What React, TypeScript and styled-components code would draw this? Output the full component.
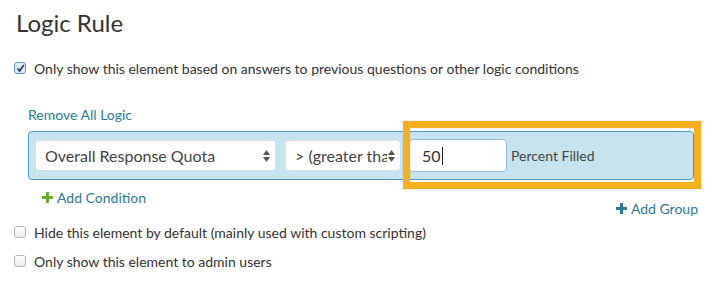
import styled, { createGlobalStyle } from 'styled-components';

const GlobalStyle = createGlobalStyle`
  html, body { margin: 0; padding: 0; background: #fff; }
  body { font-family: Lato, "Open Sans", sans-serif; color: #444; }
`;

const Page = styled.div`
  width: 710px;
  height: 282px;
  padding: 8px 0 0 14px;
  box-sizing: border-box;
  position: relative;
  overflow: hidden;
`;

const Title = styled.h1`
  margin: 0 0 0 2px;
  font-size: 24px;
  font-weight: 400;
  color: #333;
  line-height: 30px;
`;

const CheckRow = styled.label<{ $top: number }>`
  display: flex;
  align-items: center;
  gap: 8px;
  margin-top: ${(p) => p.$top}px;
  font-size: 14px;
  color: #333;
  height: 16px;
`;

const Box = styled.span<{ $checked?: boolean }>`
  width: 10px;
  height: 10px;
  border-radius: 3px;
  border: 1px solid ${(p) => (p.$checked ? '#6a8ec8' : '#b4b4b4')};
  background: ${(p) => (p.$checked ? '#e4eefc' : 'linear-gradient(#fff, #ececec)')};
  display: flex;
  align-items: center;
  justify-content: center;
`;

const Link = styled.a`
  color: #2b7a9c;
  font-size: 14px;
  text-decoration: none;
  display: flex;
  align-items: center;
  gap: 4px;
  height: 16px;
`;

const RemoveLink = styled(Link)`
  margin: 30px 0 0 14px;
`;

const RuleBox = styled.div`
  margin: 9px 0 0 14px;
  width: 666px;
  height: 49px;
  box-sizing: border-box;
  background: #c6e4ef;
  border: 1px solid #4a9cc0;
  border-radius: 4px;
  display: flex;
  align-items: center;
  padding: 0 0 0 6px;
  gap: 9px;
`;

const Select = styled.div<{ $w: number }>`
  width: ${(p) => p.$w}px;
  height: 31px;
  box-sizing: border-box;
  background: #fff;
  border: 1px solid #d6e2e8;
  border-radius: 4px;
  display: flex;
  align-items: center;
  padding: 0 4px 0 9px;
  font-size: 16px;
  color: #444;
  white-space: nowrap;
  overflow: hidden;
  flex-shrink: 0;
`;

const SelectText = styled.span`
  flex: 1;
  overflow: hidden;
`;

const Input = styled.div`
  width: 98px;
  height: 33px;
  box-sizing: border-box;
  background: #fff;
  border: 1px solid #8fbde6;
  border-radius: 4px;
  display: flex;
  align-items: center;
  padding-left: 12px;
  font-size: 16px;
  color: #333;
  margin-left: -1px;
  flex-shrink: 0;
`;

const Caret = styled.span`
  width: 1px;
  height: 18px;
  background: #222;
  margin-left: 1px;
`;

const Suffix = styled.span`
  font-size: 14px;
  color: #444;
  margin-left: -5px;
`;

const ActionRow = styled.div`
  display: flex;
  justify-content: space-between;
  margin-left: 28px;
  width: 656px;
  height: 36px;
`;

const ConditionLink = styled(Link)`
  align-self: flex-start;
  margin-top: 9px;
`;

const GroupLink = styled(Link)`
  align-self: flex-end;
`;

const Highlight = styled.div`
  position: absolute;
  left: 403px;
  top: 121px;
  width: 298px;
  height: 68px;
  box-sizing: border-box;
  border: 7px solid #f6b01e;
  pointer-events: none;
  box-shadow: 0 0 1px rgba(0, 0, 0, 0.3), inset 0 0 1px rgba(0, 0, 0, 0.4);
`;

const Arrows = () => (
  <svg width="9" height="14" viewBox="0 0 9 14">
    <path d="M4.5 1 L8 6 H1 Z" fill="#555" />
    <path d="M4.5 13 L8 8 H1 Z" fill="#555" />
  </svg>
);

const Plus = ({ color }: { color: string }) => (
  <svg width="11" height="11" viewBox="0 0 11 11">
    <path d="M4 0 H7 V4 H11 V7 H7 V11 H4 V7 H0 V4 H4 Z" fill={color} />
  </svg>
);

const Tick = () => (
  <svg width="9" height="9" viewBox="0 0 9 9">
    <path d="M1.5 4.5 L3.6 7 L7.8 1" stroke="#1d3f8c" strokeWidth="1.8" fill="none" />
  </svg>
);

export default function App() {
  return (
    <>
      <GlobalStyle />
      <Page>
        <Title>Logic Rule</Title>
        <CheckRow $top={22}>
          <Box $checked>
            <Tick />
          </Box>
          Only show this element based on answers to previous questions or other logic conditions
        </CheckRow>
        <RemoveLink>Remove All Logic</RemoveLink>
        <RuleBox>
          <Select $w={241}>
            <SelectText>Overall Response Quota</SelectText>
            <Arrows />
          </Select>
          <Select $w={116}>
            <SelectText>&gt; (greater than)</SelectText>
            <Arrows />
          </Select>
          <Input>
            50
            <Caret />
          </Input>
          <Suffix>Percent Filled</Suffix>
        </RuleBox>
        <ActionRow>
          <ConditionLink>
            <Plus color="#6bab2c" />
            Add Condition
          </ConditionLink>
          <GroupLink>
            <Plus color="#2b7a9c" />
            Add Group
          </GroupLink>
        </ActionRow>
        <CheckRow $top={8}>
          <Box />
          Hide this element by default (mainly used with custom scripting)
        </CheckRow>
        <CheckRow $top={13}>
          <Box />
          Only show this element to admin users
        </CheckRow>
        <Highlight />
      </Page>
    </>
  );
}
